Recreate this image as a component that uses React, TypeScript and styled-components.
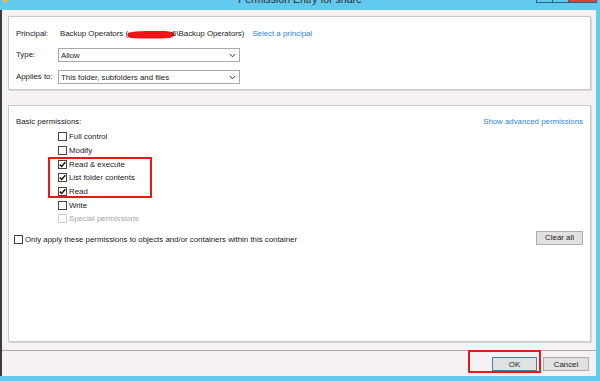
import React from 'react';
import styled, { createGlobalStyle } from 'styled-components';

const GlobalStyle = createGlobalStyle`
  html, body {
    margin: 0;
    padding: 0;
    overflow: hidden;
  }
  body {
    font-family: "Liberation Sans", Arial, sans-serif;
  }
`;

const Frame = styled.div`
  width: 600px;
  height: 381px;
  display: flex;
  flex-direction: column;
  background: #62c9ef;
  padding: 0 4px 5px 0;
  box-sizing: border-box;
  overflow: hidden;
`;

const TitleBar = styled.div`
  height: 10px;
  display: grid;
  grid-template-columns: 1fr auto 1fr;
  align-items: start;
  overflow: hidden;
  margin-right: -4px;
`;

const TitleText = styled.div`
  font-family: "Liberation Sans", Arial, sans-serif;
  font-size: 10.5px;
  line-height: 10px;
  margin-top: -6px;
  color: #2a2a2a;
  white-space: nowrap;
`;

const CaptionButtons = styled.div`
  justify-self: end;
  display: flex;
  margin-right: 3px;
`;

const CaptionButton = styled.div<{ $close?: boolean }>`
  width: ${(p) => (p.$close ? '29px' : '17px')};
  height: 3px;
  box-sizing: border-box;
  border: 1px solid #2f5f7c;
  border-top: none;
  margin-left: -1px;
  background: ${(p) => (p.$close ? '#c9483e' : '#62c9ef')};
`;

const Middle = styled.div`
  flex: 1;
  display: flex;
  min-height: 0;
`;

const LeftEdge = styled.div`
  width: 2px;
  background: #3b3b3b;
`;

const Content = styled.div`
  flex: 1;
  display: flex;
  flex-direction: column;
  background: #f5f1f5;
  padding: 6px 5px 0 6px;
  box-sizing: border-box;
`;

const Panel = styled.div<{ $h: number }>`
  height: ${(p) => p.$h}px;
  box-sizing: border-box;
  background: #fff;
  border: 1px solid #c9c9c9;
  box-shadow: 1px 1px 0 #d9d9d9;
  padding: 10px 7px 0 7px;
  font-size: 7.85px;
  color: #1a1a1a;
`;

const FieldGrid = styled.div`
  display: grid;
  grid-template-columns: 42px auto;
  row-gap: 8px;
  align-items: center;
`;

const Label = styled.div`
  line-height: 12px;
  white-space: nowrap;
`;

const PrincipalValue = styled.div`
  display: flex;
  align-items: center;
  line-height: 12px;
  height: 12px;
  margin-top: 1px;
  white-space: nowrap;
  padding-left: 2px;
`;

const Link = styled.span<{ $gap?: number }>`
  color: #2e84e0;
  margin-left: ${(p) => p.$gap ?? 0}px;
  white-space: nowrap;
`;

const Select = styled.div`
  width: 182px;
  height: 14px;
  box-sizing: border-box;
  border: 1px solid #a9a9a9;
  background: #fff;
  display: flex;
  align-items: center;
  justify-content: space-between;
  padding: 0 3px 0 2px;
  white-space: nowrap;
`;

const HeaderRow = styled.div`
  display: flex;
  justify-content: space-between;
  align-items: center;
  height: 10px;
  line-height: 10px;
  margin-top: 1px;
`;

const PermList = styled.div`
  margin: 3px 0 0 42px;
  display: flex;
  flex-direction: column;
`;

const Highlight = styled.div`
  width: 104px;
  margin-left: -10px;
  padding-left: 10px;
  box-sizing: border-box;
  outline: 2px solid #ee1515;
  outline-offset: -2px;
  display: flex;
  flex-direction: column;
`;

const CheckRow = styled.div<{ $disabled?: boolean }>`
  height: 13.67px;
  display: flex;
  align-items: center;
  gap: 2px;
  white-space: nowrap;
  color: ${(p) => (p.$disabled ? '#a6a6a6' : '#1a1a1a')};
`;

const Box = styled.span<{ $disabled?: boolean }>`
  width: 9px;
  height: 9px;
  box-sizing: border-box;
  border: 1px solid ${(p) => (p.$disabled ? '#cdcdcd' : '#444')};
  background: #fff;
  display: inline-flex;
  align-items: center;
  justify-content: center;
  flex-shrink: 0;
`;

const BottomRow = styled.div`
  margin-top: 5px;
  display: flex;
  justify-content: space-between;
  align-items: flex-end;
`;

const OnlyApply = styled(CheckRow)`
  height: 10px;
  margin-left: -2px;
`;

const Button = styled.div<{ $default?: boolean; $w: number }>`
  width: ${(p) => p.$w}px;
  height: 14px;
  box-sizing: border-box;
  border: 1px solid ${(p) => (p.$default ? '#3c7fb1' : '#acacac')};
  background: #e1e1e1;
  display: flex;
  align-items: center;
  justify-content: center;
  font-size: 7.85px;
  color: #1a1a1a;
`;

const Footer = styled.div`
  flex: 1;
  margin: 8px -5px 0 -6px;
  border-top: 1px solid #a9a9a9;
  display: flex;
  justify-content: flex-end;
  align-items: flex-start;
  padding-right: 7px;
`;

const OkHighlight = styled.div`
  margin-top: -1px;
  padding: 7px 4px 2px 24px;
  outline: 2px solid #ee1515;
  outline-offset: -2px;
`;

const CancelSlot = styled.div`
  margin: 6px 0 0 2px;
`;

const Chevron = () => (
  <svg width="7" height="5" viewBox="0 0 7 5">
    <path d="M0.8 1 L3.5 3.8 L6.2 1" fill="none" stroke="#333" strokeWidth="1" />
  </svg>
);

const Scribble = () => (
  <svg width="48" height="9" viewBox="0 0 48 9" style={{ margin: '0 -3px 0 -1px' }}>
    <path
      d="M2 2.5 C10 0.6 24 0.8 36 1 C42 1 46 2 47.5 3.5 C47.5 6 45 8 40 8.3 C28 8.8 14 8.6 4 8 C1 7.6 0.3 6 0.5 4.5 C0.6 3.5 1 2.8 2 2.5 Z"
      fill="#f01414"
    />
  </svg>
);

const Check = () => (
  <svg width="7" height="7" viewBox="0 0 7 7">
    <path d="M0.8 3.6 L2.7 5.5 L6.3 1.2" fill="none" stroke="#1a1a1a" strokeWidth="1.5" />
  </svg>
);

type Perm = { label: string; checked?: boolean; disabled?: boolean };

function CheckItem({ label, checked, disabled }: Perm) {
  return (
    <CheckRow $disabled={disabled}>
      <Box $disabled={disabled}>{checked && <Check />}</Box>
      {label}
    </CheckRow>
  );
}

function App() {
  return (
    <>
      <GlobalStyle />
      <Frame>
        <TitleBar>
          <svg width="10" height="3" viewBox="0 0 10 3" style={{ marginLeft: 3 }}>
            <rect x="0" y="0" width="5" height="2" fill="#e8b83a" />
          </svg>
          <TitleText>Permission Entry for share</TitleText>
          <CaptionButtons>
            <CaptionButton />
            <CaptionButton />
            <CaptionButton $close />
          </CaptionButtons>
        </TitleBar>
        <Middle>
          <LeftEdge />
          <Content>
            <Panel $h={74} style={{ marginBottom: 15 }}>
              <FieldGrid>
                <Label>Principal:</Label>
                <PrincipalValue>
                  Backup Operators (
                  <Scribble />
                  6\Backup Operators)
                  <Link $gap={8}>Select a principal</Link>
                </PrincipalValue>
                <Label>Type:</Label>
                <Select>
                  Allow
                  <Chevron />
                </Select>
                <Label>Applies to:</Label>
                <Select>
                  This folder, subfolders and files
                  <Chevron />
                </Select>
              </FieldGrid>
            </Panel>
            <Panel $h={237}>
              <HeaderRow>
                <span>Basic permissions:</span>
                <Link>Show advanced permissions</Link>
              </HeaderRow>
              <PermList>
                <CheckItem label="Full control" />
                <CheckItem label="Modify" />
                <Highlight>
                  <CheckItem label="Read & execute" checked />
                  <CheckItem label="List folder contents" checked />
                  <CheckItem label="Read" checked />
                </Highlight>
                <CheckItem label="Write" />
                <CheckItem label="Special permissions" disabled />
              </PermList>
              <BottomRow>
                <OnlyApply>
                  <Box />
                  Only apply these permissions to objects and/or containers within this container
                </OnlyApply>
                <Button $w={47}>Clear all</Button>
              </BottomRow>
            </Panel>
            <Footer>
              <OkHighlight>
                <Button $w={45} $default>
                  OK
                </Button>
              </OkHighlight>
              <CancelSlot>
                <Button $w={46}>Cancel</Button>
              </CancelSlot>
            </Footer>
          </Content>
        </Middle>
      </Frame>
    </>
  );
}

export default App;
